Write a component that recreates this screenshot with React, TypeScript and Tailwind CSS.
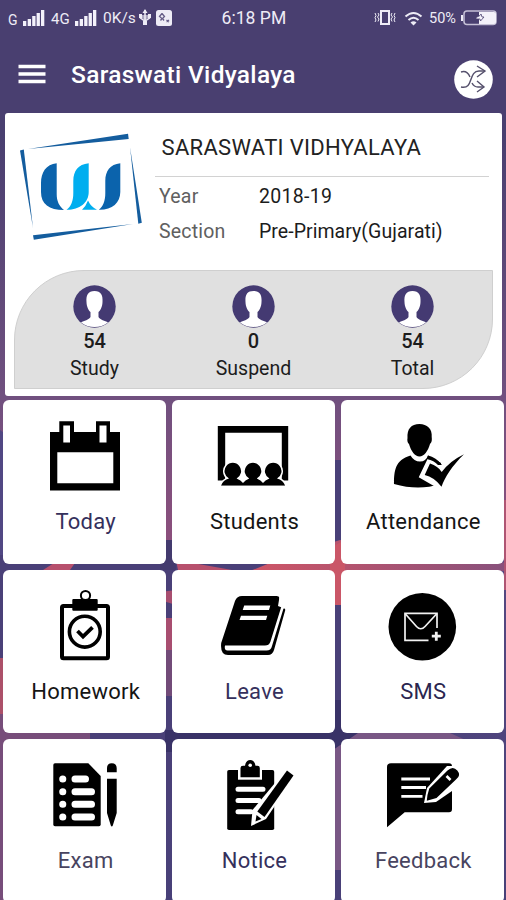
import type { ReactNode } from 'react'

interface Stat {
  value: string
  label: string
}

interface MenuItem {
  label: string
  className: string
  icon: ReactNode
}

const STATS: Stat[] = [
  { value: '54', label: 'Study' },
  { value: '0', label: 'Suspend' },
  { value: '54', label: 'Total' },
]

function Wallpaper() {
  return (
    <svg className="absolute inset-0 -z-10 h-[900px] w-[506px]" viewBox="0 0 506 900" preserveAspectRatio="none">
      <defs>
        <linearGradient id="base" x1="0" y1="0" x2="0" y2="1">
          <stop offset="0" stopColor="#493f70" />
          <stop offset="0.15" stopColor="#493f70" />
          <stop offset="0.44" stopColor="#70507f" />
          <stop offset="0.6" stopColor="#8b4f7c" />
          <stop offset="0.63" stopColor="#554881" />
          <stop offset="1" stopColor="#484078" />
        </linearGradient>
        <linearGradient id="rose" x1="0" y1="0" x2="1" y2="0">
          <stop offset="0" stopColor="#cf5566" />
          <stop offset="1" stopColor="#88517c" />
        </linearGradient>
      </defs>
      <rect width="506" height="900" fill="url(#base)" />
      <path d="M0 430L60 475V560L0 658Z" fill="#514783" />
      <path d="M0 555H270V800H0Z" fill="#4a4078" />
      <path d="M160 540H176V570H160Z" fill="#433a6e" />
      <path d="M43 570L54 563H75L70 570ZM176 560L232 570H178Z" fill="#b7506d" />
      <path d="M0 658L90 690V900H0Z" fill="#774d7a" />
      <path d="M0 658H5V714H0Z" fill="#ac5069" />
      <path d="M160 592L176 590V605L160 600ZM160 618H176V650L160 665Z" fill="#a84e70" />
      <path d="M160 650H176V696H160Z" fill="#724b78" />
      <path d="M330 460H350V900H330Z" fill="#494078" />
      <path d="M270 563L340 540L506 563V571H250Z" fill="url(#rose)" />
      <path d="M330 548L345 540V605H330Z" fill="#ca5667" />
      <path d="M165 730H358V752H165ZM330 700H345V752H330Z" fill="#393267" />
      <path d="M330 752L358 733H450L470 742L345 870H330Z" fill="#795785" />
      <path d="M504 500H506V590H504Z" fill="#af5573" />
    </svg>
  )
}

function SignalBars() {
  return (
    <svg className="h-[18px] w-[22px]" viewBox="0 0 22 18" fill="#f3f1fa">
      <path d="M0 12h3.3v5H0zM4.7 10h3.3v7H4.7zM9.2 7h3.3v10H9.2zM13.6 4h3.3v13h-3.3zM18 1h3.3v16H18z" />
    </svg>
  )
}

function StatusBar() {
  return (
    <div className="grid h-9 grid-cols-[221.5px_145.5px_1fr] items-center text-[#eeecf6]">
      <div className="flex items-center pl-2 text-[15px]">
        <span className="w-[15px] pt-1 text-[14px]">G</span>
        <SignalBars />
        <span className="ml-[6px] w-6 pt-[3px] text-[15px]">4G</span>
        <SignalBars />
        <span className="ml-[6px] w-[36px] pt-[2px] text-[15.5px] whitespace-nowrap">0K/s</span>
        <svg className="h-[18px] w-3" viewBox="0 0 12 18" fill="none" stroke="#eeecf6" strokeWidth="1.5">
          <path d="M6 1V16M1.5 6V9L6 12L10.5 9V6" />
          <path d="M3.5 4L6 0L8.5 4ZM0 5H3V9H0ZM9 5H12V9H9ZM4 12H8V16H4Z" fill="#eeecf6" stroke="none" />
          <path d="M3 6H9V9L6 11L3 9Z" fill="#eeecf6" fillOpacity="0.6" stroke="none" />
        </svg>
        <svg className="ml-[5px] size-4" viewBox="0 0 16 16">
          <rect width="16" height="16" rx="2.5" fill="#eeecf6" />
          <path d="M6 3.5L3.5 6.5L6 8.5L4.5 10.5M6 3.5L8.5 6.5L6.5 8.5L8 10.5M10.5 10L13 12M13 10L10.5 12" fill="none" stroke="#665d87" strokeWidth="1.3" />
        </svg>
      </div>
      <div className="text-[17.5px] tracking-[0.05px] whitespace-nowrap">6:18 PM</div>
      <div className="flex items-center pl-[7px]">
        <svg className="h-[18px] w-[22px]" viewBox="0 0 22 18" fill="none" stroke="#eeecf6">
          <rect x="7" y="2" width="8" height="13" strokeWidth="2" />
          <path d="M4 4L5 6L3.5 8L5 10L4 12.5M18 4L17 6L18.5 8L17 10L18 12.5M1 4L2 6.5L1 8.5L2 11L1 13M21 4L20 6.5L21 8.5L20 11L21 13" strokeWidth="1" />
        </svg>
        <svg className="ml-2 h-4 w-[19px]" viewBox="0 0 19 16" fill="none" stroke="#eeecf6" strokeWidth="2">
          <path d="M1.5 6.5Q9.5-0.5 17.5 6.5M4.5 10Q9.5 5.5 14.5 10" />
          <path d="M6.5 12.5Q9.5 10 12.5 12.5L9.5 15.5Z" fill="#eeecf6" stroke="none" />
        </svg>
        <span className="ml-[6px] w-8 pt-[2px] text-[14.5px] whitespace-nowrap">50%</span>
        <svg className="h-4 w-9" viewBox="0 0 36 16">
          <rect x="3" y="1" width="32" height="13.5" rx="3" fill="none" stroke="#c5c0d6" strokeWidth="1.5" />
          <path d="M18 2H33Q35 2 35 4V12Q35 14 33 14H18Z" fill="#f3f1fa" />
          <path d="M1 5V11" stroke="#eeecf6" strokeWidth="2" />
          <path d="M15 7.5L19 5.5L20 4L21 7H23L19.5 11L19 9H15Z" fill="#f3f1fa" stroke="#493f70" strokeWidth="0.8" />
        </svg>
      </div>
    </div>
  )
}

function AppBar() {
  return (
    <header className="flex h-[77px] items-center pr-[13px] pl-[18px] text-white">
      <svg className="-mt-[2px] h-5 w-7" viewBox="0 0 28 20" stroke="#fff" strokeWidth="3.4">
        <path d="M0.5 2.5H27.5M0.5 10H27.5M0.5 17.5H27.5" />
      </svg>
      <h1 className="ml-[25px] flex-1 text-[24.5px] leading-7 font-medium tracking-[0.3px] whitespace-nowrap">Saraswati Vidyalaya</h1>
      <svg className="mt-[9px] size-[39px]" viewBox="0 0 39 39" fill="none" stroke="#55506c" strokeWidth="1.4">
        <circle cx="19.5" cy="19.5" r="19.3" fill="#fff" stroke="none" />
        <path d="M7 12Q13 10 16 17M7 27C20 30 14 11 25 11H31M18 23Q20 27 24 27H30" />
        <path d="M23 6L31 11L23 17M23 21L30 27L23 32" />
      </svg>
    </header>
  )
}

function SchoolLogo() {
  return (
    <svg className="h-[115px] w-[130px] shrink-0" viewBox="0 0 130 115">
      <g fill="#145d9e">
        <path d="M13 19L113 3.7L113.7 9Z" />
        <path d="M5 20.5L8.8 19.5L18 98Z" />
        <path d="M115 17L126.8 92.7L123.3 93.7Z" />
        <path d="M18 105.2L118 94L18.8 109.7Z" />
      </g>
      <path d="M41.7 33.3C31 34 26 43 26 53V62C26 74 34 80 49 80C44 76 41.7 71 41.7 64Z" fill="#0b63ac" />
      <path d="M73.7 33.3C63 34.5 58.3 41 58.3 51V63C58.3 71 56 77 51.5 79.7C64 80 73.7 73 73.7 62Z" fill="#00aeef" />
      <path d="M73 70.5Q76 77 82 79.7H67Q71 76 73 70.5Z" fill="#00aeef" />
      <path d="M105.3 33.3C95 34.5 90.3 41 90.3 51V63C90.3 71 88 77 83.8 79.7C97 80 105.3 73 105.3 62Z" fill="#0b63ac" />
    </svg>
  )
}

function PersonBadge() {
  return (
    <svg className="size-[43px]" viewBox="0 0 43 43">
      <circle cx="21.5" cy="21.5" r="21.2" fill="#443a72" />
      <path d="M21.5 6C15 6 13 10 13.5 17C13.5 22 16 26 17.5 27V32C16 35 11 35.5 8 37.5Q14 42 21.5 42T35 37.5C32 35.5 27 35 25.5 32V27C27 26 29.5 22 29.5 17C30 10 28 6 21.5 6Z" fill="#fff" />
    </svg>
  )
}

function SummaryCard() {
  return (
    <section className="mr-1 ml-[5px] h-[283px] rounded-[3px] bg-white">
      <div className="flex h-[156.5px] pt-[17px] pr-[13px] pl-[10px]">
        <SchoolLogo />
        <div className="ml-[10px] flex-1">
          <div className="flex h-[47px] items-center border-b border-[#d2d2d2] pb-[11px] pl-[6.5px] text-[22px] tracking-[0.32px] whitespace-nowrap text-[#222]">
            SARASWATI VIDHYALAYA
          </div>
          <dl className="grid grid-cols-[100px_1fr] pt-[2px] pl-1 text-[19.5px] leading-[35px] tracking-[0.05px] whitespace-nowrap">
            <dt className="tracking-[0.2px] text-[#606060]">Year</dt>
            <dd className="tracking-[0.3px] text-[#1c1c1c]">2018-19</dd>
            <dt className="tracking-[0.2px] text-[#606060]">Section</dt>
            <dd className="text-[#1c1c1c]">Pre-Primary(Gujarati)</dd>
          </dl>
        </div>
      </div>
      <div className="mr-[9px] ml-[9px] grid h-[119px] grid-cols-3 rounded-tl-[70px] rounded-br-[70px] border border-[#cfcfcf] bg-[#e0e0e0]">
        {STATS.map((s) => (
          <div key={s.label} className="flex flex-col items-center pt-[14px] text-[#1c1c1c]">
            <PersonBadge />
            <span className="mt-px text-[20px] leading-6 font-medium">{s.value}</span>
            <span className="mt-[2px] text-[19.5px] leading-7">{s.label}</span>
          </div>
        ))}
      </div>
    </section>
  )
}

const MENU: MenuItem[] = [
  {
    label: 'Today',
    className: 'text-[#35305c]',
    icon: (
      <>
        <path d="M5 17H14.3V6.3H29V17H51V6.3H65V17H75V75.5H5Z" />
        <path d="M18.3 10.5H25V27.5H18.3ZM54.5 10.5H61.5V27.5H54.5ZM12.3 37.3H68.3V68.3H12.3Z" fill="#fff" />
      </>
    ),
  },
  {
    label: 'Students',
    className: 'text-[#151515]',
    icon: (
      <>
        <path d="M4.8 11H75.2V65.5H4.8ZM12.2 17.7V65.5H68.8V17.7Z" fillRule="evenodd" />
        <g stroke="#fff" strokeWidth="3" paintOrder="stroke">
          <path d="M8 70.7Q10 65 16 63.5A8.3 8.3 0 1 1 23.6 63.5Q28 65 30 68Q32 65 36.2 63.5A8.3 8.3 0 1 1 43.8 63.5Q48 65 50 68Q52 65 56.4 63.5A8.3 8.3 0 1 1 64 63.5Q70 65 72.2 70.7Z" />
        </g>
        <path d="M0 70.8H80V74H0Z" fill="#fff" />
      </>
    ),
  },
  {
    label: 'Attendance',
    className: 'text-[#151515]',
    icon: (
      <>
        <path d="M37.5 9C29 9 25 14 25.5 23C25 25 25.5 28 27 29C29 36 33 41.5 37.5 41.5S46 36 48 29C50 27 50 25 49.7 22C50.5 14 45 9 37.5 9Z" />
        <path d="M28.5 40.5Q32 46.5 38 46.5T46 40.5L59 48L58 69Q37 76 12 69C12 56 13 45 28.5 40.5Z" />
        <path d="M46.5 46L39 61.5L58.7 73L63 66L82 39.3L60 54L54 47Z" fill="#fff" stroke="#fff" strokeWidth="3.5" />
        <path d="M48 48.5L42.7 60Q52 62 59.5 71.7C63 62 70 51 82 39.3Q68 46 59.7 57Q56 51 48 48.5Z" />
        <path d="M46 40.5Q54 42 60 50L56 50Q52 45.5 45 44Z" />
      </>
    ),
  },
  {
    label: 'Homework',
    className: 'text-[#151515]',
    icon: (
      <>
        <rect x="17" y="21" width="46" height="52.3" rx="1.5" fill="none" stroke="#000" strokeWidth="4" />
        <rect x="27.3" y="14" width="25.4" height="11.7" rx="1" />
        <circle cx="40.5" cy="10.5" r="4.6" fill="#fff" stroke="#000" strokeWidth="2" />
        <circle cx="39.8" cy="46.7" r="15.4" fill="none" stroke="#000" strokeWidth="3.6" />
        <path d="M32.5 46L38 51.5L47.5 42.3" fill="none" stroke="#000" strokeWidth="3.8" />
      </>
    ),
  },
  {
    label: 'Leave',
    className: 'text-[#35305c]',
    icon: (
      <>
        <path d="M29 11H63.5Q67 11 66 15L65 21L70 23Q73 23 72 26L61 65Q59.5 70 55 70H15Q7 70 8.2 58L22 16Q24 11 29 11Z" />
        <path d="M66.5 12.5L72 22L71 24L66 19Z" fill="#fff" />
        <path d="M12 60.5H52Q56 60.5 57.3 57L69 19.5L70.8 22.5L59 61Q58 65.5 53.5 65.5H14.5Q11 65.5 12 60.5Z" fill="#fff" />
        <path d="M31.2 20.5H57.3L56 25H29.7ZM28 30.7H54.3L53 35H26.5Z" fill="#fff" />
      </>
    ),
  },
  {
    label: 'SMS',
    className: 'text-[#2b264f]',
    icon: (
      <>
        <circle cx="40.3" cy="41.7" r="33.8" />
        <g fill="none" stroke="#f2f2f2" strokeWidth="1.7">
          <path d="M46.5 55.3H23V28.3H55V43" />
          <path d="M23 28.5L34.5 41.5Q38.8 46 43 41.5L55 28.5" />
          <path d="M54.3 46.7V55.7M49.8 51.2H58.8" strokeWidth="2.8" />
        </g>
      </>
    ),
  },
  {
    label: 'Exam',
    className: 'text-[#484460]',
    icon: (
      <>
        <path d="M10 9.3H43.3L55.7 22V70.5Q55.7 72.3 54 72.3H10Q8.3 72.3 8.3 70.5V11Q8.3 9.3 10 9.3Z" />
        <g stroke="#fff" strokeWidth="7" strokeLinecap="round">
          <path d="M17.7 25H17.8M17.7 37.7H17.8M17.7 50.3H17.8M17.7 63H17.8" />
          <path d="M30 25H40.5M30 37.7H46.5M30 50.3H46.5M30 63H46.5" />
        </g>
        <path d="M62 18.3V14Q62 9.3 66.8 9.3T71.7 14V18.3ZM62 24.7H71.7V59L67.8 71.5Q66.8 73.5 65.8 71.5L62 59Z" />
      </>
    ),
  },
  {
    label: 'Notice',
    className: 'text-[#35305c]',
    icon: (
      <>
        <rect x="14.2" y="16" width="47" height="60" rx="1.8" />
        <path d="M25 14H49V25.7H25Z" fill="#fff" />
        <path d="M27.5 23.3V14Q27.5 11.7 30 11.7H32Q33 6 37.2 6T42.5 11.7H44.5Q46.8 11.7 46.8 14V23.3Z" />
        <circle cx="37.2" cy="11.2" r="1.8" fill="#fff" />
        <path d="M25 35.3H50M25 46.5H46M25 57.7H38" stroke="#fff" strokeWidth="5" strokeLinecap="round" />
        <path d="M74 14.5L83 20.5L53 65L38 72L39.5 56Z" fill="#fff" />
        <path d="M74 16.5L80.5 21.5L51.5 63L44.3 57.5Z" />
        <path d="M43.5 61L48.5 65L42.5 67.5Z" />
      </>
    ),
  },
  {
    label: 'Feedback',
    className: 'text-[#484460]',
    icon: (
      <>
        <path d="M9 9.3H67Q70 9.3 70 12.5V55Q70 58.3 67 58.3H22.7L5 73.3V13Q5 9.3 9 9.3Z" />
        <path d="M19.3 25H48M19.3 33.5H44M19.3 42.3H40.5" stroke="#fff" strokeWidth="2.8" />
        <path d="M65 12H78V29L70 37L54 48L42 49L45 34Z" fill="#fff" />
        <path d="M65.5 16.5Q71 11.5 75.3 16.5T74 25.5L54.5 44L44.8 46.8Q45 41 47.3 34.5Z" />
        <path d="M64.5 22L68.5 26" stroke="#fff" strokeWidth="2.6" />
      </>
    ),
  },
]

function MenuTile({ item }: { item: MenuItem }) {
  return (
    <button className="flex h-[163.5px] flex-col items-center rounded-[6px] bg-white pt-[15px]">
      <svg className="size-20 overflow-visible" viewBox="0 0 80 80">
        {item.icon}
      </svg>
      <span className={`mt-[13px] pl-[2px] text-[22px] leading-7 tracking-[0.25px] ${item.className}`}>{item.label}</span>
    </button>
  )
}

export default function App() {
  return (
    <div className="relative isolate h-[900px] w-[506px] overflow-hidden bg-[#493f70] font-[Roboto,sans-serif]">
      <Wallpaper />
      <StatusBar />
      <AppBar />
      <SummaryCard />
      <main className="mt-1 grid grid-cols-3 gap-x-[5.5px] gap-y-[6px] pr-[2px] pl-[3px]">
        {MENU.map((item) => (
          <MenuTile key={item.label} item={item} />
        ))}
      </main>
    </div>
  )
}
